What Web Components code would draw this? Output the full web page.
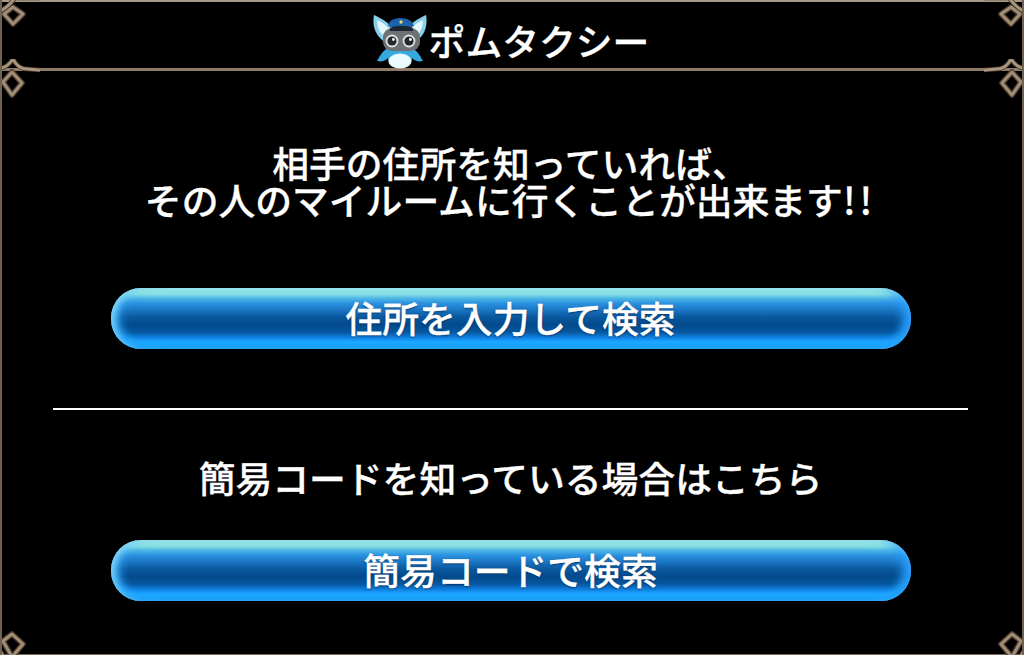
<!doctype html>
<html lang="ja">
<head>
<meta charset="utf-8">
<title>ポムタクシー</title>
<style>
  html, body { margin: 0; height: 100%; background: #000; }
</style>
</head>
<body>
<pom-dialog>
  <pom-title slot="title">ポムタクシー</pom-title>
  <pom-note style="--note-top: 73px">相手の住所を知っていれば、<br>その人のマイルームに行くことが出来ます<span style="letter-spacing: 4px">!!</span></pom-note>
  <pom-button style="--btn-top: 70px">住所を入力して検索</pom-button>
  <pom-rule></pom-rule>
  <pom-note style="--note-top: 49px">簡易コードを知っている場合はこちら</pom-note>
  <pom-button style="--btn-top: 44px">簡易コードで検索</pom-button>
</pom-dialog>

<script>
const FONT = '"Noto Sans CJK JP", "Noto Sans", sans-serif';

const BAR_TOP = "M0 11 C5 9 9 6 15 -2 L30 -2 L40 -2";
const BAR_MID = "M0 9 C5 9 9 6 13 0 C16 6 20 10 27 10 L40 11";
const BAR_LOW = "M0 24 C5 32 9 36 18 40 C24 42 30 43 40 43";
const DIA_TOP = "M4 14 L13 7 L23 14 L13 24 Z";
const DIA_MID = "M3 23 L12 13 L22 24 L12 36 Z";
const DIA_LOW = "M3 14 L12 7 L23 17 L12 30 Z";

// one ornament of the frame: a knob on the bar and a diamond under it
function knot(bar, dia, flip) {
  return `<svg width="40" height="46" viewBox="0 0 40 46" style="transform:${flip}; display:block; overflow:hidden" aria-hidden="true">
    <g fill="none" stroke-linecap="round" stroke-linejoin="round">
      <path d="${dia}" stroke="#4c3c2d" stroke-width="5.6"/>
      <path d="${dia}" stroke="#a08e76" stroke-width="3"/>
      <path d="${bar}" stroke="#4c3c2d" stroke-width="4.6"/>
      <path d="${bar}" stroke="#a8957e" stroke-width="2.8"/>
    </g>
  </svg>`;
}

class PomDialog extends HTMLElement {
  connectedCallback() {
    const root = this.attachShadow({ mode: "open" });
    root.innerHTML = `
      <style>
        :host {
          display: flex; flex-direction: column; position: relative;
          width: 1024px; height: 655px; box-sizing: border-box; overflow: hidden;
          background: #000; color: #fff; font-family: ${FONT};
          border-left: 2px solid #6f6252; border-right: 2px solid #6f6252;
        }
        header {
          flex: none; display: flex; justify-content: center; height: 66px;
          border-top: 2px solid #a89a88; border-bottom: 3px solid #8d7c6a;
        }
        main { flex: 1; display: flex; flex-direction: column; align-items: center; margin-right: 3px; }
        .foot { position: absolute; left: 0; right: 0; bottom: 0; height: 1px; background: #7a6a58; }
        .k { position: absolute; line-height: 0; }
      </style>
      <header><slot name="title"></slot></header>
      <main><slot></slot></main>
      <div class="foot"></div>
      <div class="k" style="left:-2px;top:0">${knot(BAR_TOP, DIA_TOP, "none")}</div>
      <div class="k" style="right:-2px;top:0">${knot(BAR_TOP, DIA_TOP, "scaleX(-1)")}</div>
      <div class="k" style="left:-2px;top:59px">${knot(BAR_MID, DIA_MID, "none")}</div>
      <div class="k" style="right:-2px;top:59px">${knot(BAR_MID, DIA_MID, "scaleX(-1)")}</div>
      <div class="k" style="left:-2px;top:627px">${knot(BAR_LOW, DIA_LOW, "none")}</div>
      <div class="k" style="right:-2px;top:627px">${knot(BAR_LOW, DIA_LOW, "scaleX(-1)")}</div>
    `;
  }
}

class PomTitle extends HTMLElement {
  connectedCallback() {
    const root = this.attachShadow({ mode: "open" });
    root.innerHTML = `
      <style>
        :host { display: flex; align-items: flex-start; gap: 0; margin-left: -4px; }
        svg { display: block; margin-top: 10px; filter: blur(.4px); }
        span { font-size: 36.8px; font-weight: 500; line-height: 1; margin-top: 20px; -webkit-text-stroke: .3px #fff; }
      </style>
      <svg width="58" height="58" viewBox="0 0 58 58" aria-hidden="true">
        <path d="M3 3 C1 14 4 24 15 31 L24 18 C18 11 10 6 3 3 Z" fill="#86cfea"/>
        <path d="M6 8 C6 15 9 22 15 26 L20 18 C16 14 11 10 6 8 Z" fill="#e2f6fb"/>
        <path d="M55 3 C57 14 54 24 43 31 L34 18 C40 11 48 6 55 3 Z" fill="#86cfea"/>
        <path d="M52 8 C52 15 49 22 43 26 L38 18 C42 14 47 10 52 8 Z" fill="#e2f6fb"/>
        <path d="M17 36 C10 40 8 46 6 49 C11 50 14 49 17 46 C18 52 22 56 29 56 C36 56 40 52 41 46 C44 49 47 50 52 49 C50 46 48 40 41 36 Z" fill="#35a8de"/>
        <ellipse cx="29" cy="49" rx="11.5" ry="7.5" fill="#eafaff"/>
        <path d="M17 14 C18 8 24 6 30 6 C36 6 42 9 43 14 C37 17 23 17 17 14 Z" fill="#1c62ac"/>
        <circle cx="30" cy="10" r="1.7" fill="#e6d66c"/>
        <rect x="12" y="16" width="37" height="23" rx="9" fill="#6d7173"/>
        <path d="M19 16 C24 13 37 13 42 16 L42 19 L19 19 Z" fill="#1a2632"/>
        <circle cx="21" cy="29" r="6.4" fill="#e2e2e2"/>
        <circle cx="38" cy="29" r="6.4" fill="#e2e2e2"/>
        <circle cx="21" cy="29" r="4.6" fill="#23282c"/>
        <circle cx="38" cy="29" r="4.6" fill="#23282c"/>
        <circle cx="22.4" cy="27.5" r="1.4" fill="#fff"/>
        <circle cx="39.4" cy="27.5" r="1.4" fill="#fff"/>
      </svg>
      <span><slot></slot></span>
    `;
  }
}

class PomNote extends HTMLElement {
  connectedCallback() {
    const root = this.attachShadow({ mode: "open" });
    root.innerHTML = `
      <style>
        :host {
          display: block; margin-top: var(--note-top, 0); text-align: center;
          font-size: 36.8px; font-weight: 500; line-height: 37px; white-space: nowrap;
          -webkit-text-stroke: .3px #fff;
        }
      </style>
      <slot></slot>
    `;
  }
}

class PomButton extends HTMLElement {
  connectedCallback() {
    const root = this.attachShadow({ mode: "open" });
    root.innerHTML = `
      <style>
        :host {
          display: flex; align-items: center; justify-content: center; flex: none;
          width: 800px; height: 61px; margin-top: var(--btn-top, 0); border-radius: 30px;
          font-size: 36.8px; font-weight: 500; color: #fff; -webkit-text-stroke: .3px #fff;
          text-shadow: 0 1px 2px rgba(0,30,70,.7);
          background: linear-gradient(180deg,
            #8ee4e2 0, #86e0e2 10%, #4eb6e6 17%, #2a92e0 25%, #1c78c6 35%,
            #0a589e 48%, #024a8c 60%, #06569e 72%, #1284e6 82%, #1ea4ff 88%, #1ca6ff 94%, #0a60b6 100%);
          box-shadow:
            inset 4px 3px 7px -1px rgba(170,235,240,.7),
            inset 15px 0 11px -7px rgba(50,165,250,.95),
            inset -15px 0 11px -7px rgba(40,155,250,.95),
            inset -5px -6px 8px -3px rgba(30,170,255,.9),
            inset 5px -6px 8px -3px rgba(30,170,255,.9);
        }
        span { position: relative; top: -2px; }
      </style>
      <span><slot></slot></span>
    `;
  }
}

class PomRule extends HTMLElement {
  connectedCallback() {
    const root = this.attachShadow({ mode: "open" });
    root.innerHTML = `
      <style>:host { display: block; flex: none; width: 915px; height: 2px; margin-top: 59px; background: #fff; }</style>
    `;
  }
}

customElements.define("pom-dialog", PomDialog);
customElements.define("pom-title", PomTitle);
customElements.define("pom-note", PomNote);
customElements.define("pom-button", PomButton);
customElements.define("pom-rule", PomRule);
</script>
</body>
</html>
